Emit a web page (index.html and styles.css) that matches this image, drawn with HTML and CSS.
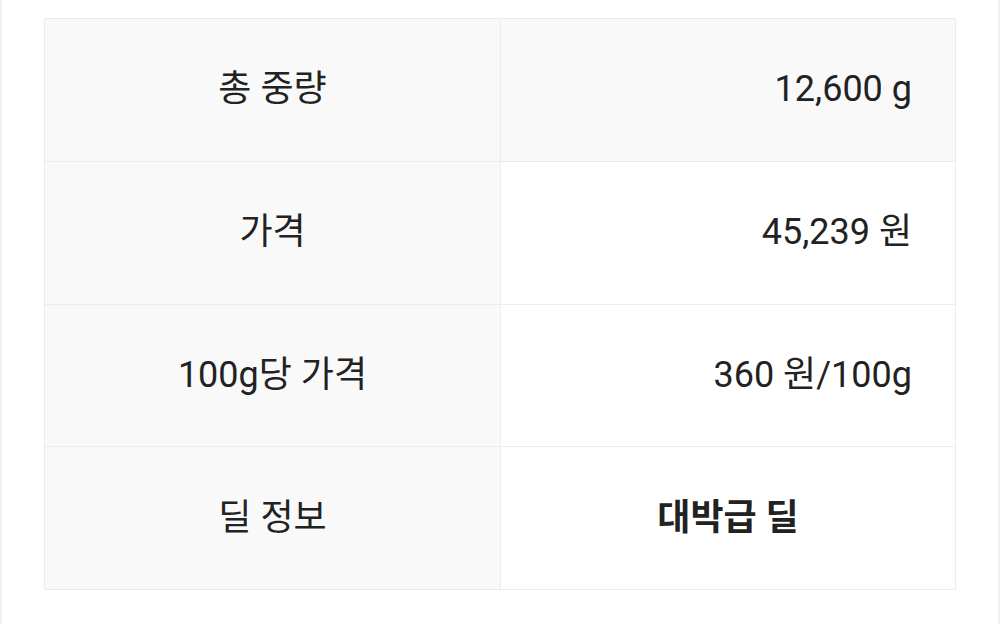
FILE: index.html
```html
<!DOCTYPE html>
<html lang="ko">
<head>
<meta charset="utf-8">
<link rel="stylesheet" href="styles.css">
</head>
<body>
<div class="frame">
  <table class="spec">
    <tr class="head-row">
      <th>총 중량</th>
      <td>12,600 g</td>
    </tr>
    <tr>
      <th>가격</th>
      <td>45,239 원</td>
    </tr>
    <tr>
      <th>100g당 가격</th>
      <td>360 원/100g</td>
    </tr>
    <tr>
      <th>딜 정보</th>
      <td class="deal">대박급 딜</td>
    </tr>
  </table>
</div>
</body>
</html>
```
FILE: styles.css
```css
html, body {
  margin: 0;
  padding: 0;
  background: #ffffff;
}
.frame {
  box-sizing: border-box;
  width: 1000px;
  height: 624px;
  padding: 18px 42px 0 42px;
  border-left: 2px solid #f0f0f0;
  border-right: 2px solid #f0f0f0;
  font-family: Roboto, "Noto Sans CJK KR", sans-serif;
  color: #222222;
}
.spec {
  width: 912px;
  border-collapse: collapse;
  table-layout: fixed;
}
.spec th,
.spec td {
  box-sizing: border-box;
  height: 142.75px;
  border: 1px solid #ececec;
  font-size: 36px;
  font-weight: 400;
  line-height: 1.2;
  vertical-align: middle;
  padding: 0;
}
.spec th {
  width: 456px;
  background: #f9f9f9;
  text-align: center;
}
.spec td {
  background: #ffffff;
  text-align: right;
  padding-right: 43px;
}
.spec .head-row td {
  background: #f9f9f9;
}
.spec td.deal {
  text-align: center;
  padding-right: 0;
  font-weight: 700;
}
```
